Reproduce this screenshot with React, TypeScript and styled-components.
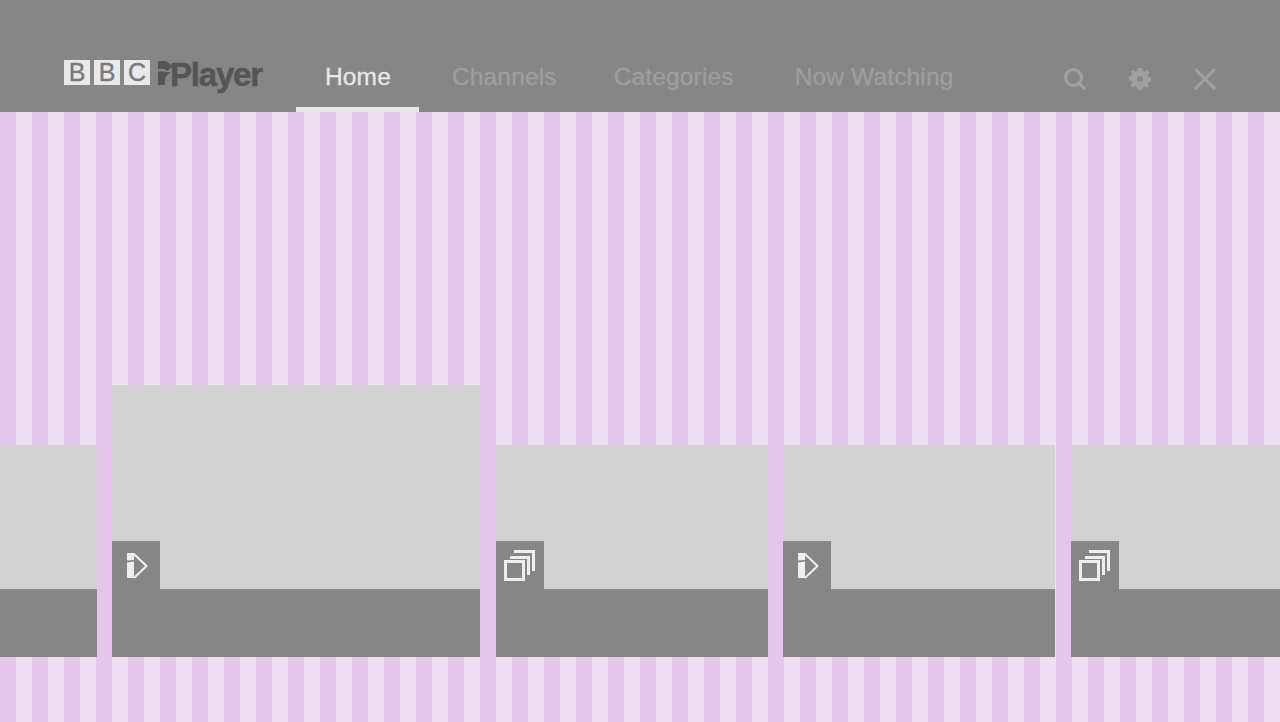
import styled, { createGlobalStyle } from 'styled-components';

const GlobalStyle = createGlobalStyle`
  html, body {
    margin: 0;
    padding: 0;
    height: 100%;
    overflow: hidden;
  }

  body {
    font-family: "Liberation Sans", Arial, sans-serif;
  }
`;

const Page = styled.div`
  display: flex;
  flex-direction: column;
  height: 100vh;
`;

const Header = styled.header`
  display: flex;
  flex: none;
  height: 112px;
  padding: 0 64px;
  box-sizing: border-box;
  background-color: #868686;
`;

const Logo = styled.div`
  display: flex;
  align-items: flex-start;
  width: 198px;
  margin-right: 34px;
  padding-top: 60px;
  box-sizing: border-box;
`;

const BbcBlocks = styled.div`
  display: flex;
  gap: 4px;
`;

const BbcBlock = styled.span`
  display: flex;
  align-items: center;
  justify-content: center;
  width: 26px;
  height: 25px;
  background-color: #e9e9e9;
  color: #7a7a7a;
  font-size: 25px;
  line-height: 25px;
  -webkit-text-stroke: 0.4px #7a7a7a;
`;

const IplayerMark = styled.svg`
  flex: none;
  width: 16px;
  height: 26px;
  margin-left: 7px;
  fill: #555555;
`;

const IplayerText = styled.span`
  margin-left: -3px;
  margin-top: -2px;
  color: #555555;
  font-size: 33px;
  font-weight: 700;
  line-height: 34px;
  letter-spacing: -1.2px;
  -webkit-text-stroke: 0.5px #555555;
`;

const Nav = styled.nav`
  display: flex;
  height: 100%;
`;

const NavItem = styled.a<{ $active?: boolean; $offset?: number }>`
  display: block;
  height: 100%;
  margin-left: ${(p) => p.$offset ?? 0}px;
  padding: 63px 28px 0 29px;
  box-sizing: border-box;
  border-bottom: 5px solid ${(p) => (p.$active ? '#e8e8e8' : 'transparent')};
  color: ${(p) => (p.$active ? '#e8e8e8' : '#9e9e9e')};
  font-size: 24.5px;
  line-height: 28px;
  letter-spacing: 0.15px;
  -webkit-text-stroke: 0.3px ${(p) => (p.$active ? '#e8e8e8' : '#9e9e9e')};
`;

const Actions = styled.div`
  display: flex;
  gap: 43px;
  margin-left: auto;
  padding-top: 68px;
`;

const ActionIcon = styled.svg`
  display: block;
  width: 22px;
  height: 22px;
  fill: none;
  stroke: #a0a0a0;
  stroke-width: 3;
`;

const GearIcon = styled(ActionIcon)`
  fill: #a0a0a0;
  stroke: none;
`;

const Stage = styled.main`
  display: flex;
  flex: 1;
  align-items: flex-end;
  padding-bottom: 65px;
  box-sizing: border-box;
  overflow: hidden;
  background-image: repeating-linear-gradient(
    90deg,
    #e3c6e9 0,
    #e3c6e9 16px,
    #eee0f2 16px,
    #eee0f2 32px
  );
`;

const Row = styled.div`
  display: flex;
  flex: none;
  align-items: flex-end;
  gap: 15.4px;
  margin-left: -175px;
`;

const Card = styled.article<{ $featured?: boolean }>`
  display: flex;
  flex: none;
  flex-direction: column;
  width: ${(p) => (p.$featured ? '368px' : '272px')};
  height: ${(p) => (p.$featured ? '272px' : '212px')};
`;

const Artwork = styled.div`
  position: relative;
  flex: 1;
  background-color: #d2d2d2;
`;

const Badge = styled.div`
  position: absolute;
  left: 0;
  bottom: 0;
  display: flex;
  width: 48px;
  height: 48px;
  background-color: #868686;
`;

const BadgeIcon = styled.svg`
  display: block;
  width: 48px;
  height: 48px;
`;

const Caption = styled.div`
  flex: none;
  height: 68px;
  background-color: #868686;
`;

function PlayIcon() {
  return (
    <BadgeIcon viewBox="0 0 48 48">
      <path d="M15 12h7.500L22 19l-7 .5z" fill="#efefef" />
      <path d="M15 21.500l7-1V37h-7z" fill="#efefef" />
      <path d="M22 13l12.500 12L22 37" fill="none" stroke="#efefef" strokeWidth="2" />
    </BadgeIcon>
  );
}

function StackIcon() {
  return (
    <BadgeIcon viewBox="0 0 48 48">
      <g fill="none" stroke="#efefef" strokeWidth="3">
        <rect x="9.500" y="20.500" width="18" height="18" />
        <path d="M14 16.500h18.500V34" />
        <path d="M18 10.500h19.500V30" />
      </g>
    </BadgeIcon>
  );
}

const CARDS = [
  { id: 'a' },
  { id: 'b', featured: true, icon: 'play' },
  { id: 'c', icon: 'stack' },
  { id: 'd', icon: 'play' },
  { id: 'e', icon: 'stack' },
];

export default function App() {
  return (
    <Page>
      <GlobalStyle />
      <Header>
        <Logo>
          <BbcBlocks>
            <BbcBlock>B</BbcBlock>
            <BbcBlock>B</BbcBlock>
            <BbcBlock>C</BbcBlock>
          </BbcBlocks>
          <IplayerMark viewBox="0 0 16 26">
            <path d="M1 1h8l7 5-6 5-2-2H1z" />
            <path d="M1 11.500h7V25H1z" />
            <path d="M8 12l5 0-5 6z" />
          </IplayerMark>
          <IplayerText>Player</IplayerText>
        </Logo>
        <Nav>
          <NavItem $active>Home</NavItem>
          <NavItem $offset={4}>Channels</NavItem>
          <NavItem>Categories</NavItem>
          <NavItem $offset={4}>Now Watching</NavItem>
        </Nav>
        <Actions>
          <ActionIcon viewBox="0 0 22 22">
            <circle cx="9.500" cy="9.500" r="8" />
            <path d="M15 15l6 6" />
          </ActionIcon>
          <GearIcon viewBox="0 0 22 22">
            <path
              fillRule="evenodd"
              d="M9 0h4l.6 3 1.900.8L18 2l2.500 2.500-1.800 2.600.8 1.900 2.500.5v4l-2.500.5-.8 1.900 1.800 2.600L18 20l-2.500-1.800-1.900.8L13 22H9l-.6-3-1.900-.8L4 20l-2.500-2.500 1.800-2.600-.8-1.900L0 12.500v-4L2.500 8l.8-1.900L1.500 3.500 4 2l2.500 1.800L8.400 3zM11 8a3 3 0 1 0 0 6 3 3 0 0 0 0-6z"
            />
          </GearIcon>
          <ActionIcon viewBox="0 0 22 22">
            <path d="M1 1l20 20M21 1L1 21" />
          </ActionIcon>
        </Actions>
      </Header>
      <Stage>
        <Row>
          {CARDS.map((card) => (
            <Card key={card.id} $featured={card.featured}>
              <Artwork>
                {card.icon && (
                  <Badge>{card.icon === 'play' ? <PlayIcon /> : <StackIcon />}</Badge>
                )}
              </Artwork>
              <Caption />
            </Card>
          ))}
        </Row>
      </Stage>
    </Page>
  );
}
